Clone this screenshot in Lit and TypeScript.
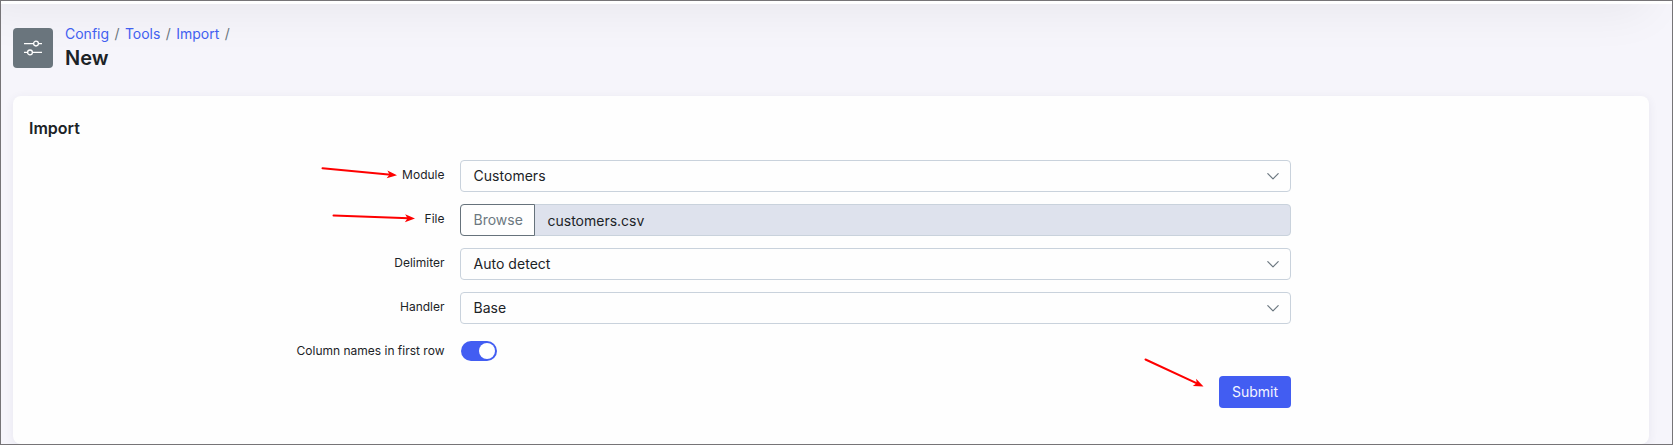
import { LitElement, html, css, svg } from "lit";
import { customElement, property, state } from "lit/decorators.js";

@customElement("select-field")
class SelectField extends LitElement {
  @property() value = "";

  static styles = css`
    :host { display: block; }
    .box {
      box-sizing: border-box; height: 32px; padding: 0 11px 0 12.500px;
      border: 1px solid #c9d2dc; border-radius: 4px; background: #fefefe;
      display: flex; align-items: center; justify-content: space-between;
    }
    .text { line-height: 22px; }
    svg { display: block; }
  `;

  render() {
    return html`<div class="box">
      <span class="text">${this.value}</span>
      <svg width="12" height="12" viewBox="0 0 12 12" fill="none" stroke="#6c7880" stroke-width="1.2" stroke-linecap="round" stroke-linejoin="round">
        <path d="M.8 3.600 6 8.800l5.200-5.200" />
      </svg>
    </div>`;
  }
}

@customElement("app-root")
class AppRoot extends LitElement {
  @state() columnNames = true;

  static styles = css`
    :host {
      display: block; box-sizing: border-box; width: 100%; height: 445px;
      border: 1px solid #767477; overflow: hidden; background: #f6f5fb;
      font: 14px/22px Inter, sans-serif; letter-spacing: 0.03px; color: #1c2327;
      position: relative;
    }
    .topbar { height: 60px; margin-top: -57px; background: #fff; box-shadow: -24px 8px 48px rgba(0, 0, 0, 0.06); }
    .heading { display: flex; align-items: center; gap: 12px; padding: 20px 12px 0; height: 48px; }
    .tile {
      width: 40px; height: 40px; border-radius: 4px; background: #6a757d;
      display: flex; align-items: center; justify-content: center;
    }
    .titles { margin-top: -2px; }
    .crumbs { display: flex; gap: 5.400px; line-height: 22px; letter-spacing: 0; color: #6a757d; }
    .crumbs a { color: #4260f0; text-decoration: none; }
    h1 { margin: 0; font-size: 20px; font-weight: 600; line-height: 26px; letter-spacing: 0; }
    .card {
      box-sizing: border-box; margin: 24px 23px 0 12px; height: 348px; padding: 21px 16px;
      background: #fefefe; border-radius: 8px; box-shadow: 0 2px 10px rgba(60, 60, 100, 0.08);
      position: relative;
    }
    h2 { margin: 0 0 21px; font-size: 16px; font-weight: 600; line-height: 22px; letter-spacing: 0; }
    .form { display: grid; grid-template-columns: 415.500px 831px; column-gap: 15.500px; row-gap: 12px; }
    .label { font-size: 12px; line-height: 16px; letter-spacing: 0; text-align: right; padding-top: 7px; }
    .file {
      box-sizing: border-box; height: 32px; display: flex; background: #dee2ed;
      border: 1px solid #c9d2dc; border-radius: 4px;
    }
    .browse {
      box-sizing: border-box; width: 75px; height: 32px; margin: -1px 0 0 -1px; padding-left: 12.500px;
      border: 1px solid #66727b; border-radius: 4px 0 0 4px; background: #fefefe;
      color: #6c7880; line-height: 30px; letter-spacing: 0;
    }
    .name { padding-left: 12.500px; line-height: 32px; letter-spacing: 0; }
    .switchcell { height: 32px; display: flex; align-items: flex-start; }
    .switch {
      box-sizing: border-box; width: 36px; height: 20px; margin: 5px 0 0 1px; padding: 2px;
      border-radius: 10px; background: #425df2; display: flex; justify-content: flex-start;
    }
    .switch.on { justify-content: flex-end; }
    .knob { width: 16px; height: 16px; border-radius: 8px; background: #fff; }
    .actions { display: flex; justify-content: flex-end; margin-top: -4px; grid-column: 2; }
    .submit {
      width: 72px; height: 32px; padding: 0; border: 0; border-radius: 4px;
      background: #425df2; color: #f4f5ff; font: 14px/32px Inter, sans-serif; letter-spacing: 0.030px;
    }
    .notes { position: absolute; left: -1px; top: -1px; pointer-events: none; }
  `;

  arrow(x1: number, y1: number, x2: number, y2: number) {
    const angle = (Math.atan2(y2 - y1, x2 - x1) * 180) / Math.PI;
    const length = Math.hypot(x2 - x1, y2 - y1);
    return svg`<g transform="translate(${x2} ${y2}) rotate(${angle})">
      <path d="M${-length} 0H-6" stroke="#fe0000" stroke-width="2" stroke-linecap="round" />
      <path d="M0 0-10-4-7.500 0-10 4z" fill="#fe0000" />
    </g>`;
  }

  render() {
    return html`
      <div class="topbar"></div>
      <div class="heading">
        <div class="tile">
          <svg width="20" height="20" viewBox="0 0 20 20" fill="none" stroke="#fff" stroke-width="1.300">
            <path d="M1 5.600h9.500M15.500 5.600H19M1 14.400h3.500M9.500 14.400H19" />
            <circle cx="13" cy="5.600" r="2.400" /><circle cx="7" cy="14.400" r="2.400" />
          </svg>
        </div>
        <div class="titles">
          <div class="crumbs"><a>Config</a><span>/</span><a>Tools</a><span>/</span><a>Import</a><span>/</span></div>
          <h1>New</h1>
        </div>
      </div>
      <div class="card">
        <h2>Import</h2>
        <div class="form">
          <div class="label">Module</div><select-field value="Customers"></select-field>
          <div class="label">File</div>
          <div class="file"><div class="browse">Browse</div><div class="name">customers.csv</div></div>
          <div class="label">Delimiter</div><select-field value="Auto detect"></select-field>
          <div class="label">Handler</div><select-field value="Base"></select-field>
          <div class="label">Column names in first row</div>
          <div class="switchcell">
            <div class="switch ${this.columnNames ? "on" : ""}" @click=${() => (this.columnNames = !this.columnNames)}><div class="knob"></div></div>
          </div>
          <div class="actions"><button class="submit">Submit</button></div>
        </div>
      </div>
      <svg class="notes" width="1673" height="445">
        ${this.arrow(322.5, 168.300, 397, 175.300)}
        ${this.arrow(333.500, 215.500, 415, 218.500)}
        ${this.arrow(1145.500, 359.500, 1203.500, 386.500)}
      </svg>
    `;
  }
}
